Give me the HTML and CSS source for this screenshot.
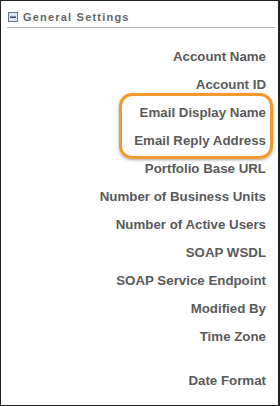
FILE: index.html
```html
<!DOCTYPE html>
<html lang="en">
<head>
    <meta charset="UTF-8">
    <meta name="viewport" content="width=device-width, initial-scale=1.0">
    <title>General Settings</title>
    <link rel="stylesheet" href="styles.css">
</head>
<body>
    <div class="panel">
        <div class="panel-header">
            <span class="toggle"><svg width="10" height="10" viewBox="0 0 10 10"><rect x="0.5" y="0.5" width="9" height="9" fill="#dde3ee" stroke="#6b7a93"/><rect x="2" y="4.5" width="6" height="1.4" fill="#2b3a5a"/></svg></span>
            <span class="title">General Settings</span>
        </div>
        <div class="fields">
            <div class="field">Account Name</div>
            <div class="field">Account ID</div>
            <div class="field">Email Display Name</div>
            <div class="field">Email Reply Address</div>
            <div class="field">Portfolio Base URL</div>
            <div class="field">Number of Business Units</div>
            <div class="field">Number of Active Users</div>
            <div class="field">SOAP WSDL</div>
            <div class="field">SOAP Service Endpoint</div>
            <div class="field">Modified By</div>
            <div class="field tall">Time Zone</div>
            <div class="field">Date Format</div>
        </div>
        <div class="highlight"></div>
    </div>
</body>
</html>
```
FILE: styles.css
```css
body {
    margin: 0;
    font-family: Arial, "Liberation Sans", sans-serif;
}
.panel {
    position: relative;
    width: 277px;
    height: 404px;
    border: 1px solid #222;
    border-right-width: 2px;
    background: #fff;
    overflow: hidden;
}
.panel-header {
    display: flex;
    align-items: center;
    gap: 5px;
    margin: 0 3px 0 6px;
    padding: 10px 0 4px 1px;
    border-bottom: 1px solid #b8b8b8;
}
.toggle {
    display: flex;
}
.title {
    font-size: 11px;
    font-weight: bold;
    letter-spacing: 1.2px;
    color: #666;
}
.fields {
    margin-top: 15px;
    padding-right: 12px;
}
.field {
    height: 28px;
    line-height: 28px;
    text-align: right;
    font-size: 13.3px;
    font-weight: bold;
    color: #5a5a5a;
}
.field.tall {
    height: 44px;
}
.highlight {
    position: absolute;
    left: 118px;
    top: 92px;
    width: 148px;
    height: 60px;
    border: 3px solid #f39a2c;
    border-radius: 13px;
    box-shadow: 0 1px 3px rgba(0, 0, 0, 0.35);
}
```
